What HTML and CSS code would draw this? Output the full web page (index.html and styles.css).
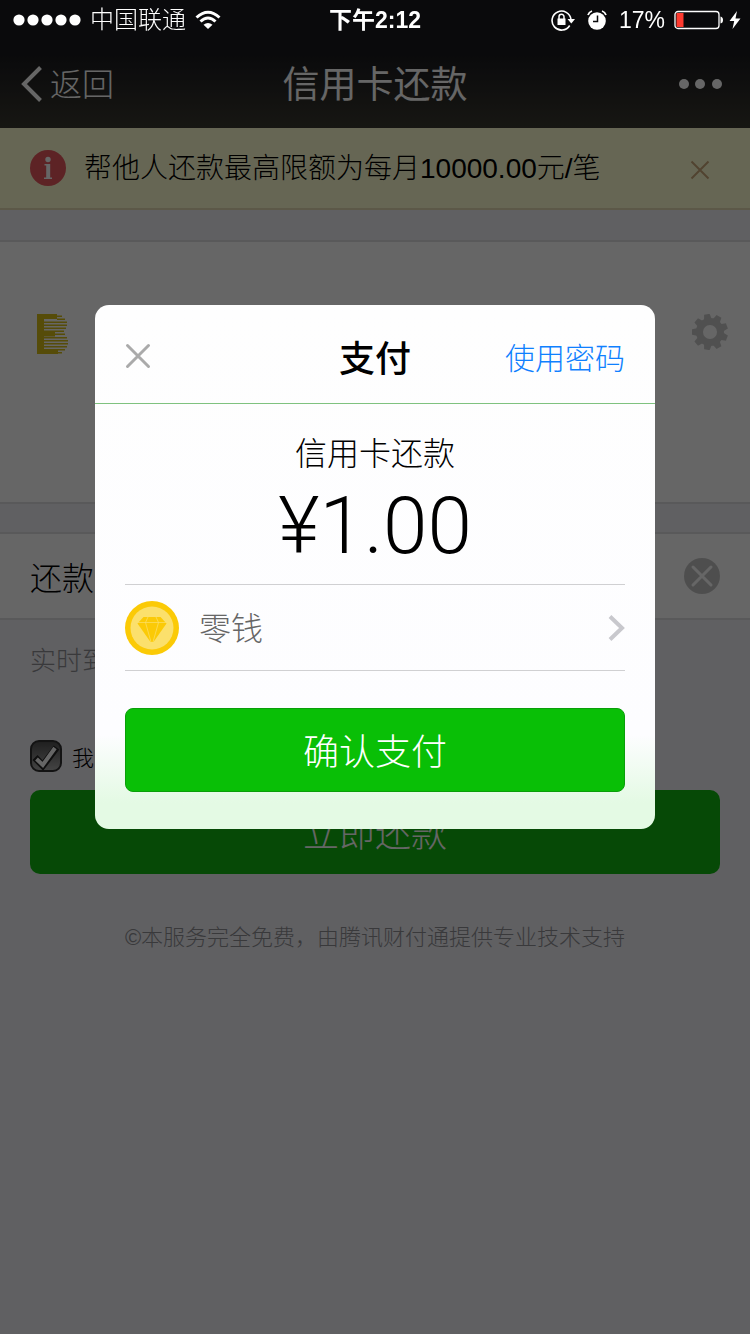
FILE: index.html
```html
<!DOCTYPE html>
<html lang="zh-CN">
<head>
    <meta charset="UTF-8">
    <meta name="viewport" content="width=device-width, initial-scale=1">
    <title>信用卡还款</title>
    <link rel="stylesheet" href="styles.css">
</head>
<body>

    <header class="top">
        <div class="status">
            <div class="status-left">
                <svg class="signal" width="68" height="12" viewBox="0 0 68 12" fill="#fff">
                    <circle cx="6" cy="6" r="5.6"/><circle cx="20" cy="6" r="5.6"/><circle cx="34" cy="6" r="5.6"/><circle cx="48" cy="6" r="5.6"/><circle cx="62" cy="6" r="5.6"/>
                </svg>
                <span class="carrier">中国联通</span>
                <svg width="26" height="20" viewBox="0 0 26 20" fill="none" stroke="#fff" stroke-width="3">
                    <path d="M1.5 7.5Q13 -3 24.500 7.500"/>
                    <path d="M5.500 11.500Q13 4.500 20.500 11.500"/>
                    <path d="M13 19L8.500 14.700Q13 11.200 17.500 14.700Z" fill="#fff" stroke="none"/>
                </svg>
            </div>
            <time class="clock">下午2:12</time>
            <div class="status-right">
                <svg width="24" height="22" viewBox="0 0 24 22">
                    <path d="M18.700 16.500A9.500 9.500 0 1 1 20 10.500" fill="none" stroke="#fff" stroke-width="1.600"/>
                    <path d="M16.500 10h7.500l-3.700 4.500z" fill="#fff"/>
                    <path d="M6.500 9.500h8v6.500h-8z" fill="#fff"/>
                    <path d="M8 10V7.700a2.500 2.500 0 0 1 5 0V10" fill="none" stroke="#fff" stroke-width="1.500"/>
                </svg>
                <svg class="alarm" width="20" height="20" viewBox="0 0 20 20">
                    <circle cx="10" cy="11" r="8.800" fill="#fff"/>
                    <path d="M1 5Q2 2 5 1M19 5Q18 2 15 1" fill="none" stroke="#fff" stroke-width="1.800"/>
                    <path d="M10.500 5.500V11.500H6" fill="none" stroke="#0b0b0d" stroke-width="1.500"/>
                </svg>
                <span>17%</span>
                <svg width="50" height="20" viewBox="0 0 50 20">
                    <rect x="1" y="1.500" width="44" height="17" rx="3" fill="none" stroke="#fff" stroke-width="1.300"/>
                    <rect x="2.500" y="3" width="7" height="14" fill="#ff3b30"/>
                    <path d="M46.500 6.500Q49 7 49 10T46.500 13.500Z" fill="#fff"/>
                </svg>
                <svg class="bolt" width="12" height="20" viewBox="0 0 12 20" fill="#fff">
                    <path d="M8 1L0.500 11H5.200L3.500 19L11.500 8.500H6.500Z"/>
                </svg>
            </div>
        </div>
        <nav class="nav">
            <a class="back" href="#">
                <svg width="21" height="36" viewBox="0 0 21 36" fill="none" stroke="#fff" stroke-width="4">
                    <path d="M19.500 1.500L3 18L19.500 34.500"/>
                </svg>
                <span>返回</span>
            </a>
            <h1>信用卡还款</h1>
            <button class="more" type="button" aria-label="更多">
                <svg width="44" height="12" viewBox="0 0 44 12" fill="#fff">
                    <circle cx="6" cy="6" r="5"/><circle cx="22" cy="6" r="5"/><circle cx="39" cy="6" r="5"/>
                </svg>
            </button>
        </nav>
    </header>

    <main>
        <div class="notice">
            <svg width="36" height="36" viewBox="0 0 36 36">
                <circle cx="18" cy="18" r="18" fill="#e8575c"/>
                <circle cx="18" cy="9.500" r="2.700" fill="#fff"/>
                <path d="M14.500 14H20.200V27.500H22V29H14V27.500H16.200V15.500H14.500Z" fill="#fff"/>
            </svg>
            <p>帮他人还款最高限额为每月10000.00元/笔</p>
            <button class="notice-close" type="button" aria-label="关闭提示">
                <svg width="20" height="20" viewBox="0 0 20 20" stroke="#cba779" stroke-width="2">
                    <path d="M1.500 1.500L18.500 18.500M18.500 1.500L1.500 18.500"/>
                </svg>
            </button>
        </div>

        <section class="bank">
            <svg width="32" height="40" viewBox="0 0 32 40" fill="#d8be17">
                <path d="M0 0H20V5H7V17.500H18V22.500H7V35H21V40H0Z"/>
                <path d="M20 1.500H25V3H20zM20 4.500H28V6H20zM7 7.500H30V9H7zM7 10.500H30V12H7zM7 13.500H29V15H7zM7 16.500H27V18H7zM18 19.500H28V21H18zM7 23H30V24.500H7zM7 26H31V27.500H7zM7 29H31V30.500H7zM7 32H30V33.500H7zM20 35H28V36.500H20zM20 38H25V39.500H20z"/>
            </svg>
            <button class="gear" type="button" aria-label="设置">
                <svg width="36" height="36" viewBox="-18 -18 36 36" fill="#c9c9c9">
                    <circle r="10.500" fill="none" stroke="#c9c9c9" stroke-width="7"/>
                    <path id="tooth" d="M-18 -2.800L-12 -4V4L-18 2.800Z"/>
                    <use href="#tooth" transform="rotate(40)"/>
                    <use href="#tooth" transform="rotate(80)"/>
                    <use href="#tooth" transform="rotate(120)"/>
                    <use href="#tooth" transform="rotate(160)"/>
                    <use href="#tooth" transform="rotate(200)"/>
                    <use href="#tooth" transform="rotate(240)"/>
                    <use href="#tooth" transform="rotate(280)"/>
                    <use href="#tooth" transform="rotate(320)"/>
                </svg>
            </button>
        </section>

        <div class="field">
            <label for="amount">还款</label>
            <input id="amount" type="text" inputmode="decimal">
            <button type="button" aria-label="清除">
                <svg width="36" height="36" viewBox="0 0 36 36">
                    <circle cx="18" cy="18" r="18" fill="#c4c4c4"/>
                    <path d="M9 9L27 27M27 9L9 27" stroke="#fff" stroke-width="3" stroke-linecap="round"/>
                </svg>
            </button>
        </div>
        <p class="hint">实时到</p>

        <label class="agree">
            <span class="tick">
                <input type="checkbox" checked>
                <svg width="32" height="32" viewBox="0 0 32 32">
                    <path d="M5 17.500L12.800 25.500L26.500 7.500" fill="none" stroke="#262626" stroke-width="7"/>
                    <path d="M6.500 19L12.800 25L25 8" fill="none" stroke="#fff" stroke-width="4"/>
                </svg>
            </span>
            <span>我</span>
        </label>
        <button class="submit" type="button">立即还款</button>
        <p class="footer">©本服务完全免费，由腾讯财付通提供专业技术支持</p>
    </main>

    <div class="overlay">
        <div class="dialog" role="dialog" aria-labelledby="dialog-title">
            <div class="dialog-head">
                <button class="dialog-close" type="button" aria-label="关闭">
                    <svg width="26" height="26" viewBox="0 0 26 26" stroke="#aaa" stroke-width="3" stroke-linecap="round">
                        <path d="M2.500 2.500L23.500 23.500M23.500 2.500L2.500 23.500"/>
                    </svg>
                </button>
                <h2 id="dialog-title">支付</h2>
                <a href="#">使用密码</a>
            </div>
            <div class="dialog-body">
                <p class="item">信用卡还款</p>
                <p class="price">¥1.00</p>
                <button class="method" type="button">
                    <svg width="54" height="54" viewBox="0 0 54 54">
                        <circle cx="27" cy="27" r="27" fill="#fbca06"/>
                        <circle cx="27" cy="27" r="21.500" fill="#fbe06c"/>
                        <path d="M18.500 16H35.500L41.500 22.500L28.500 41H25.500L12.500 22.500Z" fill="#fbca06"/>
                        <path d="M13 21.500H41M23 16L20.500 21.500L26 41M31 16L33.500 21.500L28 41" fill="none" stroke="#fbe06c" stroke-width="0.700"/>
                    </svg>
                    <span>零钱</span>
                    <svg width="18" height="28" viewBox="0 0 18 28" fill="none" stroke="#c8c8cd" stroke-width="4">
                        <path d="M3 2.500L15 14L3 25.500"/>
                    </svg>
                </button>
                <button class="confirm" type="button">确认支付</button>
            </div>
        </div>
    </div>

</body>
</html>
```
FILE: styles.css
```css
* {
    box-sizing: border-box;
}

body {
    margin: 0;
    min-height: 100vh;
    background: #f0eff5;
    color: #000;
    font-family: "Liberation Sans", "Noto Sans CJK SC", sans-serif;
    font-weight: 300;
}

h1, h2, p {
    margin: 0;
}

svg {
    display: block;
    flex-shrink: 0;
}

a {
    text-decoration: none;
}

button {
    margin: 0;
    padding: 0;
    border: 0;
    background: none;
    font: inherit;
}

/* Header */
.top {
    background: linear-gradient(#19191e 40%, #3a3930);
    color: #fff;
}

.status {
    position: relative;
    z-index: 2; /* stays bright above the overlay */
    display: grid;
    grid-template-columns: 1fr auto 1fr;
    align-items: center;
    height: 40px;
    padding: 0 9px;
    font-size: 23px;
    line-height: 40px;
}

.status-left, .status-right {
    display: flex;
    align-items: center;
    gap: 9px;
}

.status-right {
    justify-content: flex-end;
}

.signal {
    margin-left: 4px;
}

.carrier {
    font-size: 24px;
}

.alarm {
    margin: 0 3px;
}

.bolt {
    margin-left: -4px;
}

.clock {
    font-weight: 600;
}

.nav {
    display: grid;
    grid-template-columns: 1fr auto 1fr;
    align-items: center;
    height: 88px;
    padding: 0 21px;
}

.nav h1 {
    padding-bottom: 4px;
    font-size: 37px;
    font-weight: 400;
}

.back {
    display: flex;
    align-items: center;
    gap: 8px;
    color: #fff;
    font-size: 32px;
}

.back span {
    padding-bottom: 4px;
}

.more {
    justify-self: end;
    margin-right: 7px;
}

/* Page */
.notice {
    display: flex;
    align-items: center;
    gap: 18px;
    height: 82px;
    padding: 0 40px 0 30px;
    background: #ffffd3;
    border-bottom: 2px solid #e6dbb4;
    font-size: 28px;
}

.notice p {
    padding-bottom: 4px;
}

.notice-close {
    margin: 4px 0 0 auto;
}

.bank {
    display: flex;
    align-items: flex-start;
    justify-content: space-between;
    height: 264px;
    margin: 30px 0 28px;
    padding: 72px 22px 0 37px;
    background: #fff;
    border: solid #dfdfe2;
    border-width: 2px 0;
}

.field {
    display: flex;
    align-items: center;
    height: 88px;
    padding: 0 30px;
    background: #fff;
    border: solid #dfdfe2;
    border-width: 2px 0;
    font-size: 32px;
}

.field input {
    flex: 1;
    min-width: 0;
    border: 0;
    background: none;
    font: inherit;
}

.hint {
    padding: 0 30px;
    margin-top: 21px;
    color: #8f8f94;
    font-size: 26px;
    line-height: 40px;
}

.agree {
    display: flex;
    align-items: center;
    gap: 10px;
    margin: 59px 30px 18px;
    height: 32px;
    font-size: 22px;
}

.tick {
    display: grid;
}

.tick input, .tick svg {
    grid-area: 1 / 1;
}

.tick input {
    appearance: none;
    width: 32px;
    height: 32px;
    margin: 0;
    border: 2px solid #303030;
    border-radius: 9px;
    background: linear-gradient(#505050, #a8a8a8);
}

.submit {
    display: block;
    width: calc(100% - 60px);
    height: 84px;
    margin: 0 30px;
    padding-bottom: 2px;
    border-radius: 10px;
    background: #0fb70f;
    color: #fff;
    font-size: 36px;
}

.footer {
    margin-top: 44px;
    color: #8f8f94;
    font-size: 22px;
    line-height: 40px;
    text-align: center;
}

/* Payment dialog */
.overlay {
    position: fixed;
    inset: 0;
    z-index: 1;
    padding: 305px 30px 0;
    background: rgba(0, 0, 0, 0.6);
}

.dialog {
    max-width: 560px;
    margin: 0 auto;
    border-radius: 14px;
    background: linear-gradient(#fefefe, #fdfdff 82%, #e4fae4 95%);
}

.dialog-head {
    display: grid;
    grid-template-columns: 1fr auto 1fr;
    align-items: center;
    height: 99px;
    padding: 4px 30px 0;
    border-bottom: 1px solid #7fc27f;
}

.dialog-head h2 {
    font-size: 36px;
    font-weight: 500;
}

.dialog-head a {
    justify-self: end;
    color: #0f80ff;
    font-size: 30px;
}

.dialog-close {
    justify-self: start;
}

.dialog-body {
    padding: 30px 30px 37px;
    text-align: center;
}

.item {
    font-size: 32px;
    line-height: 40px;
}

.price {
    margin: 12px 0 18px;
    font-family: Roboto, "Liberation Sans", sans-serif;
    font-size: 80px;
    line-height: 80px;
}

.method {
    display: flex;
    align-items: center;
    gap: 20px;
    width: 100%;
    height: 87px;
    border: solid #d0d0d2;
    border-width: 1px 0;
    color: #666;
    font-size: 32px;
    text-align: left;
}

.method span {
    flex: 1;
    padding-bottom: 4px;
}

.confirm {
    display: block;
    width: 100%;
    height: 84px;
    margin-top: 37px;
    padding-bottom: 2px;
    border: 1px solid #0a9f0a;
    border-radius: 8px;
    background: #09bf06;
    color: #fff;
    font-size: 36px;
}
```
